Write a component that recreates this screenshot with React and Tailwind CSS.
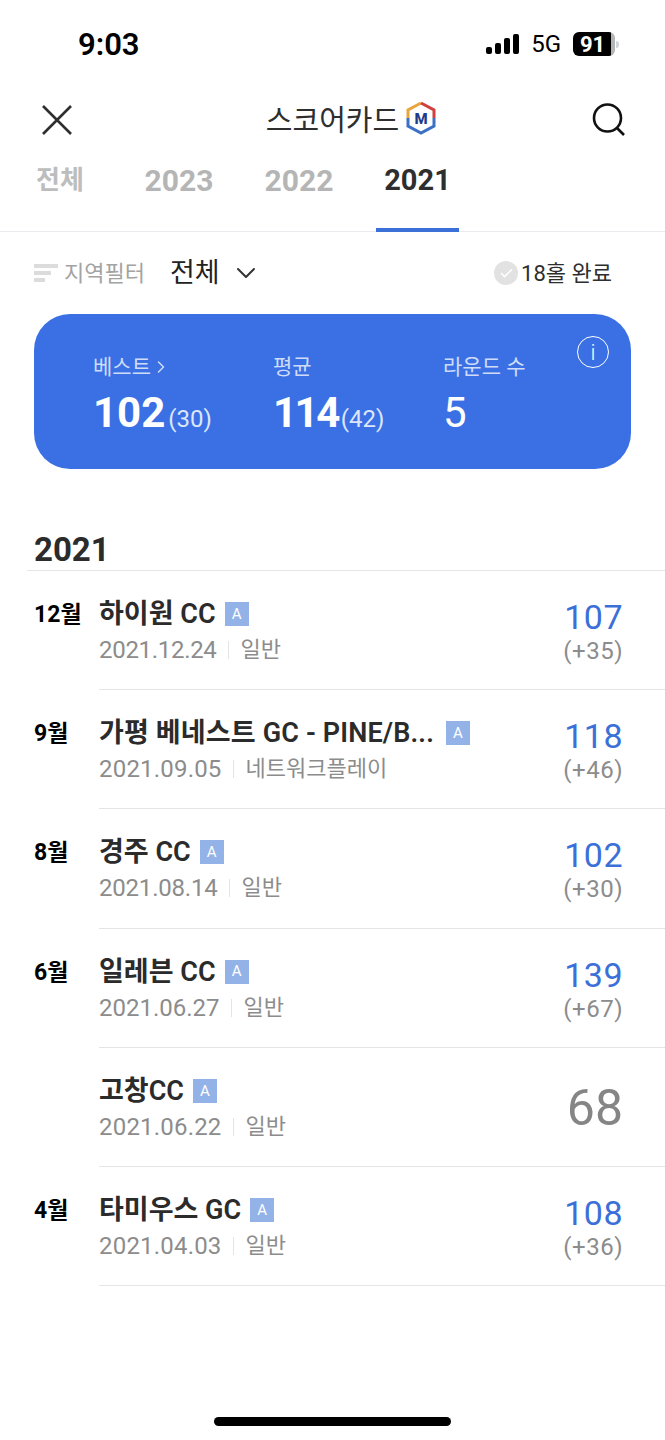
import { ChevronDown, ChevronRight, Check } from 'lucide-react';

const rounds = [
  { month: '12월', name: '하이원 CC', date: '2021.12.24', dateClass: 'tracking-[-0.3px]', type: '일반', score: '107', over: '(+35)' },
  { month: '9월', name: '가평 베네스트 GC - PINE/B...', nameClass: 'tracking-[0.15px]', badgeClass: 'ml-[12px]', date: '2021.09.05', dateClass: 'tracking-[0.2px]', type: '네트워크플레이', score: '118', over: '(+46)' },
  { month: '8월', name: '경주 CC', date: '2021.08.14', dateClass: 'tracking-[-0.2px]', type: '일반', score: '102', over: '(+30)' },
  { month: '6월', name: '일레븐 CC', date: '2021.06.27', type: '일반', score: '139', over: '(+67)' },
  { month: '', name: '고창CC', date: '2021.06.22', dateClass: 'tracking-[0.2px]', type: '일반', score: '68', over: '' },
  { month: '4월', name: '타미우스 GC', date: '2021.04.03', dateClass: 'tracking-[0.2px]', type: '일반', score: '108', over: '(+36)' },
];

function StatusBar() {
  return (
    <div className="flex h-[88px] items-center justify-between pl-[78px] pr-[46px]">
      <span className="pt-[2px] text-[31px] font-semibold text-black">9:03</span>
      <div className="flex items-center">
        <svg width="34" height="20" viewBox="0 0 34 20" fill="#000">
          <rect x="0" y="13" width="6" height="7" rx="2" />
          <rect x="9" y="9" width="6" height="11" rx="2" />
          <rect x="18" y="4" width="6" height="16" rx="2" />
          <rect x="27" y="0" width="6" height="20" rx="2" />
        </svg>
        <span className="ml-[11px] text-[24px] text-black">5G</span>
        <div className="ml-[12px] flex h-[24px] w-[42px] items-center justify-center rounded-[6px] bg-[linear-gradient(90deg,#000_90%,#b5b5b5_90%)] pr-[3px] text-[22px] font-bold text-white">91</div>
        <div className="ml-[1px] h-[7px] w-[3px] rounded-r-sm bg-gray-300" />
      </div>
    </div>
  );
}

function Header() {
  return (
    <div className="flex h-[64px] items-center justify-between pl-[41px] pr-[38px]">
      <svg width="32" height="32" viewBox="0 0 32 32" fill="none" stroke="#2e2e2e" strokeWidth="2.6">
        <path d="M2 2 L30 30 M30 2 L2 30" />
      </svg>
      <div className="ml-[39px] flex items-center">
        <span className="pt-[3px] text-[29px] text-[#2e2e2e]">스코어카드</span>
        <svg width="32" height="34" viewBox="0 0 32 34" className="mb-[4px] ml-[6px]" fill="none" strokeWidth="3">
          <path d="M16 2 L3 9 V17" stroke="#e9a63c" />
          <path d="M16 2 L29 9 V17" stroke="#d23f3f" />
          <path d="M3 17 V25 L16 32 L29 25 V17" stroke="#3b70c4" />
          <text x="16" y="22.5" textAnchor="middle" fontSize="15" fontWeight="800" fill="#1f3a8a" stroke="none">M</text>
        </svg>
      </div>
      <svg width="36" height="36" viewBox="0 0 36 36" fill="none" stroke="#111" strokeWidth="2.6">
        <circle cx="16.5" cy="16" r="13.5" />
        <path d="M26 26 L33 33" />
      </svg>
    </div>
  );
}

function Tabs() {
  const base = 'flex h-[80px] items-start justify-center whitespace-nowrap pt-[6px] font-bold leading-[45px]';
  return (
    <div className="flex h-[80px] border-b border-[#e9e9ee] pl-[36px]">
      <div className={`${base} w-[48px] text-[26px] text-[#bdbdbd]`}>전체</div>
      <div className={`${base} ml-[60px] w-[70px] text-[30px] text-[#b5b5b5]`}>2023</div>
      <div className={`${base} ml-[50px] w-[70px] text-[30px] text-[#b5b5b5]`}>2022</div>
      <div className={`${base} ml-[42px] w-[83px] border-b-[4px] border-[#3b70d8] text-[29px] text-[#2e2e2e]`}>2021</div>
    </div>
  );
}

function FilterRow() {
  return (
    <div className="flex h-[82px] items-center pl-[34px] pr-[53px]">
      <div className="flex flex-col gap-[3px]">
        <div className="h-[4px] w-[24px] bg-[#dcdcdc]" />
        <div className="h-[4px] w-[17px] bg-[#dcdcdc]" />
        <div className="h-[4px] w-[11px] bg-[#dcdcdc]" />
      </div>
      <span className="ml-[6px] text-[22px] text-[#a3a3a3]">지역필터</span>
      <span className="ml-[25px] text-[27px] text-[#222]">전체</span>
      <ChevronDown size={32} strokeWidth={2} absoluteStrokeWidth color="#333" className="ml-[10px]" />
      <div className="ml-auto flex h-[24px] w-[24px] items-center justify-center rounded-full bg-[#e2e2e2]">
        <Check size={15} strokeWidth={2.5} color="#fff" />
      </div>
      <span className="ml-[3px] text-[22px] text-[#2e2e2e]">18홀 완료</span>
    </div>
  );
}

function SummaryCard() {
  return (
    <div className="relative mx-[34px] flex h-[155px] w-[597px] rounded-[36px] bg-[#3b70e4] pl-[59px] pt-[39px] text-white">
      <div className="w-[180px]">
        <div className="flex items-center text-[21px] leading-[28px] text-[#cfdcf8]">
          베스트
          <ChevronRight size={20} strokeWidth={1.8} />
        </div>
        <div className="mt-[4px] leading-[56px]">
          <span className="text-[42px] font-bold">102</span>
          <span className="ml-[3px] text-[24px] text-[#dce6fb]">(30)</span>
        </div>
      </div>
      <div className="w-[170px]">
        <div className="text-[21px] leading-[28px] text-[#cfdcf8]">평균</div>
        <div className="mt-[4px] leading-[56px]">
          <span className="text-[42px] font-bold tracking-[-2.5px]">114</span>
          <span className="ml-[3px] text-[24px] text-[#dce6fb]">(42)</span>
        </div>
      </div>
      <div>
        <div className="text-[21px] leading-[28px] text-[#cfdcf8]">라운드 수</div>
        <div className="mt-[4px] text-[42px] leading-[56px]">5</div>
      </div>
      <div className="absolute right-[22px] top-[22px] flex h-[32px] w-[32px] items-center justify-center rounded-full border border-white text-[22px] font-light">i</div>
    </div>
  );
}

function RoundRow({ round }) {
  const hasOver = round.over !== '';
  return (
    <div className="flex h-[119.2px]">
      <div className="w-[65px] pt-[28px] text-[23px] font-bold leading-[32px] text-black">{round.month}</div>
      <div className="flex flex-1 items-start justify-between border-b border-[#e4e4e4] pr-[42px]">
        <div className="pt-[24px]">
          <div className="flex items-center">
            <span className={`text-[27px] font-semibold leading-[38px] text-[#2b2b2b] ${round.nameClass ?? ''}`}>{round.name}</span>
            <span className={`flex h-[24px] w-[24px] items-center justify-center bg-[#93b2e8] text-[15px] text-white ${round.badgeClass ?? 'ml-[9px]'}`}>A</span>
          </div>
          <div className="flex items-center text-[24px] leading-[34px] text-[#8c8c8c]">
            <span className={round.dateClass}>{round.date}</span>
            <span className="ml-[11px] mr-[12px] h-[18px] w-px bg-[#e4e4e4]" />
            <span className="text-[22px]">{round.type}</span>
          </div>
        </div>
        {hasOver ? (
          <div className="pt-[26px] text-right">
            <div className="text-[34px] leading-[40px] tracking-[0.5px] text-[#3b70d8]">{round.score}</div>
            <div className="text-[24px] leading-[29px] tracking-[0.5px] text-[#8c8c8c]">{round.over}</div>
          </div>
        ) : (
          <div className="pt-[33px] text-[50px] leading-[54px] text-[#858585]">{round.score}</div>
        )}
      </div>
    </div>
  );
}

export default function App() {
  return (
    <div className="flex h-[1440px] w-[665px] flex-col bg-white font-['Roboto','Noto_Sans_CJK_KR',sans-serif]">
      <StatusBar />
      <Header />
      <Tabs />
      <FilterRow />
      <SummaryCard />
      <h2 className="ml-[34px] mt-[61px] text-[33px] font-bold leading-[40px] text-[#2b2b2b]">2021</h2>
      <div className="ml-[27px] border-t border-[#e4e4e4] pl-[7px]">
        {rounds.map((round) => (
          <RoundRow key={round.date} round={round} />
        ))}
      </div>
      <div className="mt-auto flex justify-center pb-[14px]">
        <div className="h-[9px] w-[237px] rounded-full bg-black" />
      </div>
    </div>
  );
}
